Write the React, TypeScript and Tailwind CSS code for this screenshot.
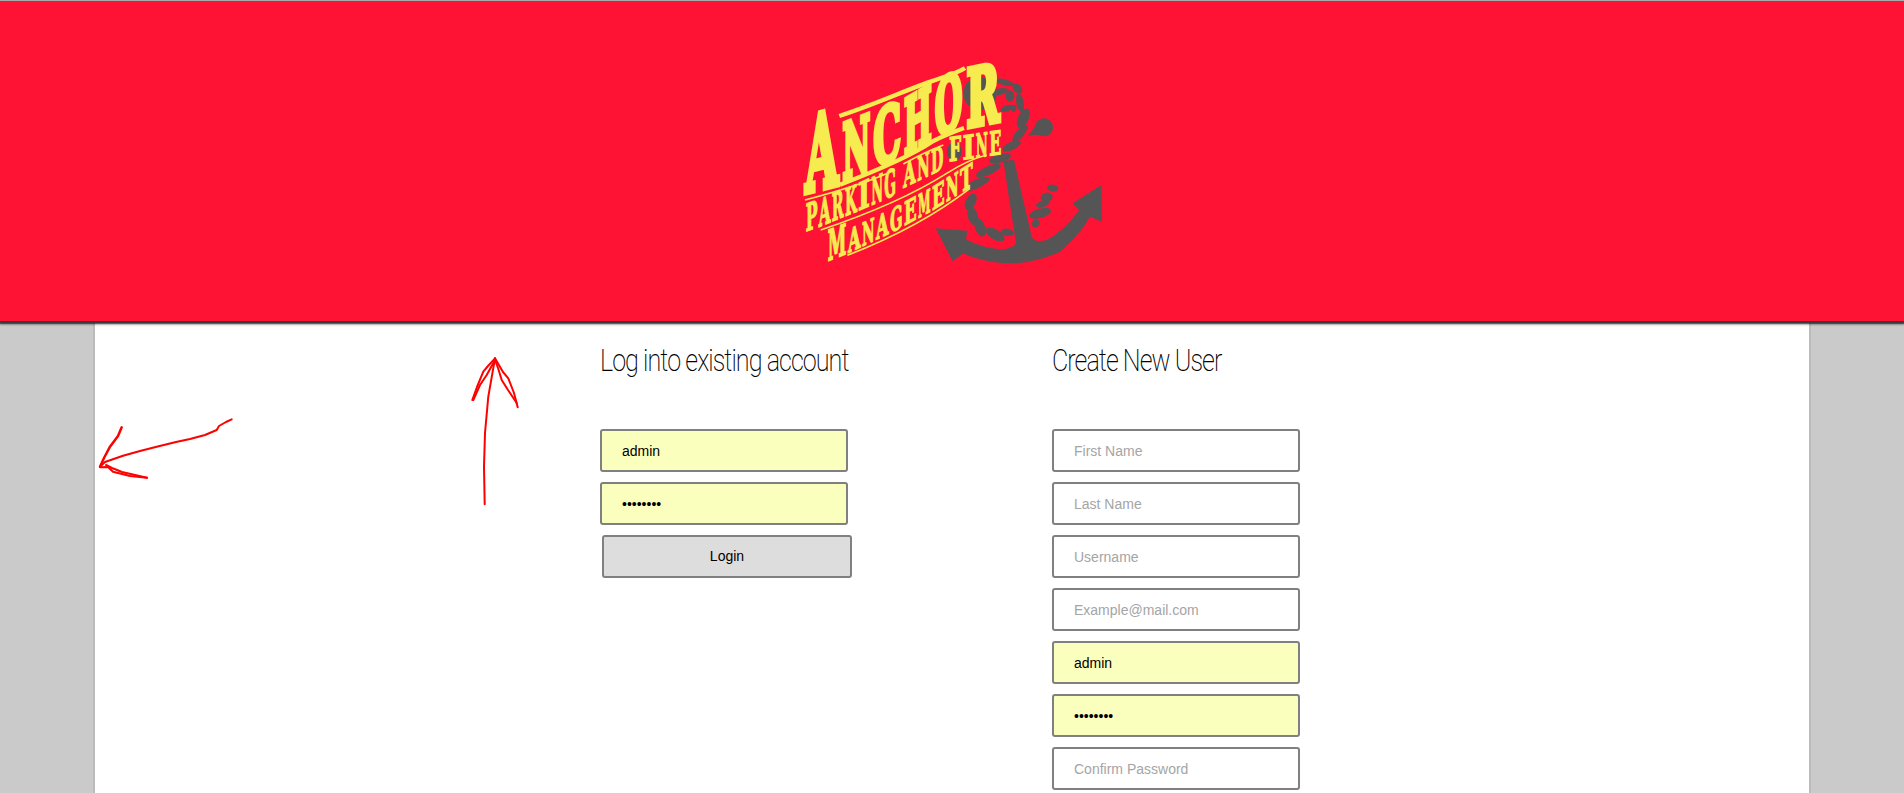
const font = { fontFamily: '"Liberation Sans", Arial, sans-serif' };

type Pt = [number, number];
function interp(pts: Pt[], x: number) {
  for (let i = 0; i < pts.length - 1; i++) {
    const [x0, y0] = pts[i];
    const [x1, y1] = pts[i + 1];
    if (x <= x1 || i === pts.length - 2) {
      const s = (y1 - y0) / (x1 - x0);
      return { y: y0 + (x - x0) * s, s };
    }
  }
  return { y: 0, s: 0 };
}

function Word({ text, x0, x1, base, h, sw = 5 }: { text: string; x0: number; x1: number; base: Pt[]; h: number; sw?: number }) {
  const step = (x1 - x0) / text.length;
  return (
    <>
      {text.split('').map((c, i) => {
        const x = x0 + step * i;
        const mid = x + step / 2;
        const { y, s } = interp(base, mid);
        const sy = h / 72.9;
        const glyph = step * 0.9;
        return (
          <text
            key={i}
            transform={`matrix(1 ${s} 0 ${sy} ${x + step * 0.05} ${y - (s * glyph) / 2})`}
            fontFamily='"DejaVu Serif", serif'
            fontWeight="700"
            fontSize="100"
            textLength={glyph}
            lengthAdjust="spacingAndGlyphs"
            fill="#f7ec4f"
            stroke="#f7ec4f"
            strokeWidth={sw}
            strokeLinejoin="miter"
          >
            {c}
          </text>
        );
      })}
    </>
  );
}

const rope: [number, number, number, number, number][] = [
  [735, 127, 28, 9, 15],
  [772, 145, 17, 12, 45],
  [750, 168, 13, 17, 0],
  [780, 188, 11, 28, -10],
  [718, 155, 28, 10, -10],
  [740, 205, 20, 9, -20],
  [762, 205, 7, 11, 10],
  [790, 235, 16, 32, 25],
  [780, 280, 32, 12, -50],
  [755, 318, 30, 12, -25],
  [720, 355, 34, 13, -15],
  [685, 392, 40, 13, -25],
  [650, 432, 42, 13, -25],
  [632, 485, 26, 15, -60],
  [638, 527, 15, 29, -15],
  [660, 562, 15, 29, -20],
  [705, 583, 32, 15, 30],
  [742, 577, 19, 11, 10],
  [878, 444, 17, 10, 10],
  [860, 472, 18, 14, -10],
  [848, 492, 21, 9, -15],
  [840, 520, 34, 14, -15],
  [827, 550, 11, 13, 25],
];

function Logo() {
  return (
    <svg viewBox="0 0 1140 720" width="380" height="240" className="mr-[4px] shrink-0">
      <g fill="#555555">
        <path d="M730 362 L762 360 L815 590 Q825 610 860 600 Q910 575 958 510 L938 490 L1024 435 L1026 545 L990 530 Q960 585 900 635 Q820 672 740 670 Q660 665 610 640 L578 664 L527 565 L622 572 L618 598 Q660 622 720 628 Q755 628 768 610 Z" />
        <path d="M805 285 Q825 265 828 250 A27 27 0 1 1 852 289 Q830 280 806 287 Z" />
        <circle cx="660" cy="160" r="50" />
        <ellipse cx="583" cy="335" rx="22" ry="28" />
        {rope.map(([cx, cy, rx, ry, r], i) => (
          <ellipse key={i} cx={cx} cy={cy} rx={rx} ry={ry} transform={`rotate(${r} ${cx} ${cy})`} />
        ))}
      </g>
      <g fill="none" stroke="#f7ec4f">
        <path d="M238 228 C350 192 450 145 520 122 C565 106 595 98 615 84" strokeWidth="13" />
        <path d="M240 434 C350 392 450 350 520 303 C560 283 590 272 612 264" strokeWidth="13" />
        <path d="M135 480 C230 455 330 425 405 390" strokeWidth="5" />
        <path d="M430 372 C470 350 510 330 550 315" strokeWidth="5" />
        <path d="M182 570 C300 530 450 470 560 400 C600 375 640 355 680 345" strokeWidth="5" />
        <path d="M262 646 C380 600 520 530 630 445" strokeWidth="5" />
      </g>
      <Word text="A" x0={130} x1={240} base={[[130, 458], [240, 430]]} h={225} sw={7} />
      <Word text="NCHO" x0={243} x1={612} base={[[243, 420], [350, 378], [450, 336], [530, 290], [612, 252]]} h={165} sw={8} />
      <Word text="R" x0={614} x1={724} base={[[614, 262], [724, 240]]} h={172} sw={8} />
      <Word text="PARKING" x0={135} x1={410} base={[[135, 575], [190, 555], [300, 510], [410, 462]]} h={82} sw={4} />
      <Word text="AND" x0={428} x1={552} base={[[428, 445], [552, 385]]} h={72} sw={4} />
      <Word text="FINE" x0={565} x1={726} base={[[565, 365], [726, 342]]} h={72} sw={4} />
      <Word text="M" x0={200} x1={262} base={[[200, 664], [262, 640]]} h={92} sw={4} />
      <Word text="ANAGEMENT" x0={262} x1={640} base={[[262, 640], [400, 575], [520, 510], [640, 435]]} h={70} sw={4} />
    </svg>
  );
}

function Arrows() {
  return (
    <svg
      className="absolute left-0 top-0 pointer-events-none"
      width="600"
      height="540"
      viewBox="0 0 600 540"
      fill="none"
      stroke="#ff0000"
      strokeWidth="2"
      strokeLinecap="round"
      strokeLinejoin="round"
    >
      <path d="M231.7 419.3 L226 422 L219 426 L216.7 430 L205 435 L190 439 L176 442 L156.7 446.7 L140 451 L123 455.7 L105 462 L100 466.7" />
      <path d="M121.7 427.3 L118 436 L110 446.7 L104 458 L100 466.7" strokeWidth="2.5" />
      <path d="M100 467.3 L108 467 L113 471.7 L130 476 L147 477.7" />
      <path d="M106 465 L112 468 L122 472 L135 475 L147 477.7" />
      <path d="M484.7 504.3 L484 466.7 L485 433 L488.3 396.7 L495 358.3" />
      <path d="M472.3 400 L477 387 L483.3 371.7 L488 366 L495 358.3" />
      <path d="M473.3 400 L480 385 L486.7 375 L495 360" />
      <path d="M517.7 407.3 L514 393 L508.3 378.3 L503 372 L495 358.3" />
      <path d="M516.7 403 L508 390 L501.7 380 L498 368 L495 360" />
    </svg>
  );
}

function Field({ placeholder, value, type = 'text' }: { placeholder?: string; value?: string; type?: string }) {
  return (
    <input
      type={type}
      readOnly
      placeholder={placeholder}
      defaultValue={value}
      style={font}
      className={`block h-[43px] w-[248px] rounded-[3px] border-2 border-[#808080] px-[20px] text-[14px] text-black outline-none placeholder:text-[#a5a5a5] placeholder:opacity-100 ${value ? 'bg-[#faffbd]' : 'bg-white'}`}
    />
  );
}

function Heading({ children }: { children: string }) {
  return (
    <h2
      style={{ fontFamily: 'Roboto, "Liberation Sans", sans-serif' }}
      className="mb-[47px] h-[40px] origin-left scale-x-[0.785] text-[32px] leading-[36px] font-extralight tracking-[-1.2px] text-black whitespace-nowrap"
    >
      {children}
    </h2>
  );
}

export default function App() {
  return (
    <div className="relative h-[793px] overflow-hidden bg-[#cacaca]" style={font}>
      <header className="relative z-10 flex h-[321px] items-start justify-center border-t border-[#aaaaaa] bg-[#fe1335] pt-[39px] shadow-[0_2px_0_#3a3a3a,0_3px_1px_rgba(0,0,0,0.5),0_4px_2px_rgba(0,0,0,0.25)]">
        <Logo />
      </header>
      <main className="mx-[93px] flex h-[472px] border-x-2 border-[#bbbbbb] bg-white pl-[505px] pt-[21px]">
        <section className="w-[452px]">
          <Heading>Log into existing account</Heading>
          <form className="flex flex-col gap-[10px]">
            <Field value="admin" />
            <Field value="password" type="password" />
            <button
              type="button"
              className="ml-[2px] h-[43px] w-[250px] rounded-[3px] border-2 border-[#808080] bg-[#dddddd] text-[14px] text-black"
            >
              Login
            </button>
          </form>
        </section>
        <section className="w-[300px]">
          <Heading>Create New User</Heading>
          <form className="flex flex-col gap-[10px]">
            <Field placeholder="First Name" />
            <Field placeholder="Last Name" />
            <Field placeholder="Username" />
            <Field placeholder="Example@mail.com" />
            <Field value="admin" />
            <Field value="password" type="password" />
            <Field placeholder="Confirm Password" />
          </form>
        </section>
      </main>
      <Arrows />
    </div>
  );
}
